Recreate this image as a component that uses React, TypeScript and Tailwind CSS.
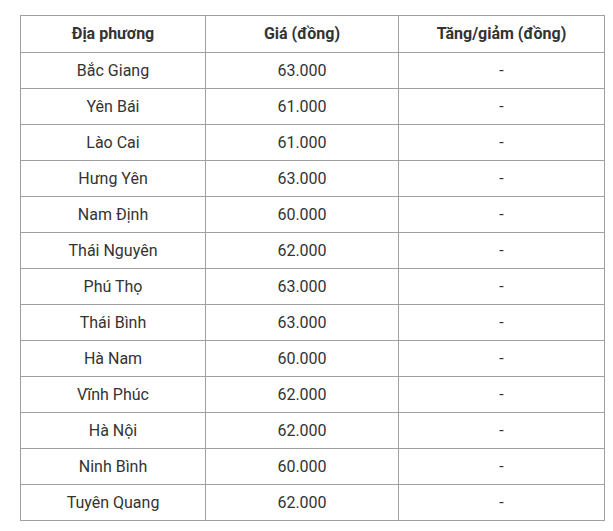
const rows: [string, string][] = [
  ["Bắc Giang", "63.000"],
  ["Yên Bái", "61.000"],
  ["Lào Cai", "61.000"],
  ["Hưng Yên", "63.000"],
  ["Nam Định", "60.000"],
  ["Thái Nguyên", "62.000"],
  ["Phú Thọ", "63.000"],
  ["Thái Bình", "63.000"],
  ["Hà Nam", "60.000"],
  ["Vĩnh Phúc", "62.000"],
  ["Hà Nội", "62.000"],
  ["Ninh Bình", "60.000"],
  ["Tuyên Quang", "62.000"],
];

export default function App() {
  return (
    <div className="w-[613px] h-[531px] bg-white pt-[15px] pl-[20px] font-['Roboto',sans-serif] text-[16px] text-[#333]">
      <table className="border-collapse table-fixed w-[584px]">
        <colgroup>
          <col className="w-[185px]" />
          <col className="w-[193px]" />
          <col className="w-[206px]" />
        </colgroup>
        <thead>
          <tr className="h-[37px]">
            <th className="border border-[#a0a0a0] font-bold text-center p-0">Địa phương</th>
            <th className="border border-[#a0a0a0] font-bold text-center p-0">Giá (đồng)</th>
            <th className="border border-[#a0a0a0] font-bold text-center p-0">Tăng/giảm (đồng)</th>
          </tr>
        </thead>
        <tbody>
          {rows.map(([name, price]) => (
            <tr key={name} className="h-[36px]">
              <td className="border border-[#a0a0a0] text-center p-0">{name}</td>
              <td className="border border-[#a0a0a0] text-center p-0">{price}</td>
              <td className="border border-[#a0a0a0] text-center p-0">-</td>
            </tr>
          ))}
        </tbody>
      </table>
    </div>
  );
}
